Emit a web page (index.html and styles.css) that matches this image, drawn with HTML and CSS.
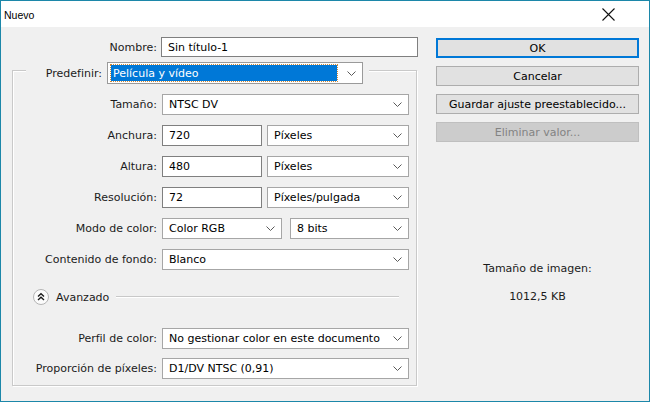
FILE: index.html
```html
<!DOCTYPE html>
<html lang="es">

<head>
    <meta charset="UTF-8">
    <title>Nuevo</title>
    <link rel="stylesheet" href="styles.css">
</head>

<body>
    <div class="dialog">
        <div class="titlebar">
            <span class="title">Nuevo</span>
            <svg class="close" width="13" height="13" viewBox="0 0 13 13">
                <path d="M0.5 0.5 L12.5 12.5 M12.5 0.5 L0.5 12.5" stroke="#111" stroke-width="1.1" fill="none"/>
            </svg>
        </div>

        <div class="content">
            <div class="form">
                <div class="row name-row">
                    <label class="label name-label">Nombre:</label>
                    <div class="field input w-name">Sin título-1</div>
                </div>

                <div class="group">
                    <div class="legend">
                        <label class="label legend-label">Predefinir:</label>
                        <div class="field select focus w-preset">
                            <span class="value">Película y vídeo</span>
                            <svg class="chev" width="9" height="5" viewBox="0 0 9 5"><path d="M0.5 0.5 L4.5 4.5 L8.5 0.5" stroke="#5a5a5a" fill="none"/></svg>
                        </div>
                    </div>

                    <div class="row">
                        <label class="label">Tamaño:</label>
                        <div class="field select w-full">
                            <span class="value">NTSC DV</span>
                            <svg class="chev" width="9" height="5" viewBox="0 0 9 5"><path d="M0.5 0.5 L4.5 4.5 L8.5 0.5" stroke="#5a5a5a" fill="none"/></svg>
                        </div>
                    </div>

                    <div class="row">
                        <label class="label">Anchura:</label>
                        <div class="field input w-num">720</div>
                        <div class="field select w-unit">
                            <span class="value">Píxeles</span>
                            <svg class="chev" width="9" height="5" viewBox="0 0 9 5"><path d="M0.5 0.5 L4.5 4.5 L8.5 0.5" stroke="#5a5a5a" fill="none"/></svg>
                        </div>
                    </div>

                    <div class="row">
                        <label class="label">Altura:</label>
                        <div class="field input w-num">480</div>
                        <div class="field select w-unit">
                            <span class="value">Píxeles</span>
                            <svg class="chev" width="9" height="5" viewBox="0 0 9 5"><path d="M0.5 0.5 L4.5 4.5 L8.5 0.5" stroke="#5a5a5a" fill="none"/></svg>
                        </div>
                    </div>

                    <div class="row">
                        <label class="label">Resolución:</label>
                        <div class="field input w-num">72</div>
                        <div class="field select w-unit">
                            <span class="value">Píxeles/pulgada</span>
                            <svg class="chev" width="9" height="5" viewBox="0 0 9 5"><path d="M0.5 0.5 L4.5 4.5 L8.5 0.5" stroke="#5a5a5a" fill="none"/></svg>
                        </div>
                    </div>

                    <div class="row">
                        <label class="label">Modo de color:</label>
                        <div class="field select w-mode">
                            <span class="value">Color RGB</span>
                            <svg class="chev" width="9" height="5" viewBox="0 0 9 5"><path d="M0.5 0.5 L4.5 4.5 L8.5 0.5" stroke="#5a5a5a" fill="none"/></svg>
                        </div>
                        <div class="field select w-bits">
                            <span class="value">8 bits</span>
                            <svg class="chev" width="9" height="5" viewBox="0 0 9 5"><path d="M0.5 0.5 L4.5 4.5 L8.5 0.5" stroke="#5a5a5a" fill="none"/></svg>
                        </div>
                    </div>

                    <div class="row">
                        <label class="label">Contenido de fondo:</label>
                        <div class="field select w-full">
                            <span class="value">Blanco</span>
                            <svg class="chev" width="9" height="5" viewBox="0 0 9 5"><path d="M0.5 0.5 L4.5 4.5 L8.5 0.5" stroke="#5a5a5a" fill="none"/></svg>
                        </div>
                    </div>

                    <div class="advanced">
                        <svg class="adv-icon" width="16" height="16" viewBox="0 0 16 16">
                            <circle cx="8" cy="8" r="7.5" fill="#fbfbfb" stroke="#b4b4b4"/>
                            <path d="M5 7.5 L8 4.8 L11 7.5 M5 11 L8 8.3 L11 11" stroke="#1a1a1a" stroke-width="1.4" fill="none"/>
                        </svg>
                        <span class="adv-text">Avanzado</span>
                        <span class="adv-line"></span>
                    </div>

                    <div class="row profile-row">
                        <label class="label">Perfil de color:</label>
                        <div class="field select w-full">
                            <span class="value">No gestionar color en este documento</span>
                            <svg class="chev" width="9" height="5" viewBox="0 0 9 5"><path d="M0.5 0.5 L4.5 4.5 L8.5 0.5" stroke="#5a5a5a" fill="none"/></svg>
                        </div>
                    </div>

                    <div class="row ratio-row">
                        <label class="label">Proporción de píxeles:</label>
                        <div class="field select w-full">
                            <span class="value">D1/DV NTSC (0,91)</span>
                            <svg class="chev" width="9" height="5" viewBox="0 0 9 5"><path d="M0.5 0.5 L4.5 4.5 L8.5 0.5" stroke="#5a5a5a" fill="none"/></svg>
                        </div>
                    </div>
                </div>
            </div>

            <div class="side">
                <div class="btn btn-default">OK</div>
                <div class="btn">Cancelar</div>
                <div class="btn">Guardar ajuste preestablecido...</div>
                <div class="btn btn-disabled">Eliminar valor...</div>

                <div class="size-info">
                    <div class="size-title">Tamaño de imagen:</div>
                    <div class="size-value">1012,5 KB</div>
                </div>
            </div>
        </div>
    </div>
</body>

</html>
```

FILE: styles.css
```css
body {
    margin: 0;
    padding: 0;
    font-family: "DejaVu Sans", Verdana, sans-serif;
    font-size: 11px;
    color: #1b1b1b;
    background-color: #f0f0f0;
}

.dialog {
    width: 648px;
    height: 400px;
    border: 1px solid #1c87a9;
    background-color: #f0f0f0;
}

.titlebar {
    height: 26px;
    background-color: #ffffff;
    display: flex;
    align-items: center;
    justify-content: space-between;
    padding: 0 34px 0 3px;
}

.title {
    font-family: "Liberation Sans", Arial, sans-serif;
    font-size: 10.5px;
    color: #000;
    margin-top: 1px;
}

.close {
    display: block;
}

.content {
    display: flex;
    padding-top: 10px;
}

/* left column */

.form {
    margin-left: 11px;
    width: 407px;
}

.row {
    display: flex;
    align-items: center;
    margin-top: 10px;
}

.name-row {
    margin-top: 0;
}

.label {
    width: 144px;
    text-align: right;
    margin-right: 5px;
    white-space: nowrap;
}

.name-label {
    width: 145px;
    margin-right: 4px;
}

.field {
    box-sizing: border-box;
    height: 21px;
    background-color: #ffffff;
    border: 1px solid #8e8e8e;
    color: #000;
    display: flex;
    align-items: center;
    padding-left: 6px;
    white-space: nowrap;
}

.input {
    border-color: #7f7f7f;
}

.name-row .field {
    height: 20px;
}

.select {
    justify-content: space-between;
    padding-right: 6px;
    border-color: #a6a6a6;
}

.chev {
    display: block;
    flex-shrink: 0;
}

.w-name {
    width: 257px;
}

.w-full {
    width: 247px;
}

.w-num {
    width: 100px;
}

.w-unit {
    width: 142px;
    margin-left: 5px;
}

.w-mode {
    width: 120px;
}

.w-bits {
    width: 119px;
    margin-left: 8px;
}

.w-preset {
    width: 256px;
    height: 22px;
    padding: 2px 6px 2px 3px;
    border-color: #9a9a9a;
}

.select.focus .value {
    flex: 1;
    height: 100%;
    box-sizing: border-box;
    background-color: #0078d7;
    color: #ffffff;
    outline: 1px dotted #d08a3a;
    padding-left: 2px;
    margin-right: 10px;
    display: flex;
    align-items: center;
}

/* group box */

.group {
    margin-top: 13px;
    width: 405px;
    box-sizing: border-box;
    border: 1px solid #c9c9c9;
    box-shadow: inset 1px 1px 0 #ffffff, 1px 1px 0 #ffffff;
    padding: 0 6px 6px 0;
}

.legend {
    display: flex;
    align-items: center;
    width: max-content;
    margin-top: -9px;
    margin-left: 13px;
    padding-right: 6px;
    background-color: #f0f0f0;
}

.legend-label {
    width: 76px;
}

.advanced {
    display: flex;
    align-items: center;
    height: 20px;
    margin-top: 17px;
    margin-left: 20px;
}

.adv-icon {
    display: block;
    margin-right: 7px;
}

.adv-text {
    margin-right: 7px;
}

.adv-line {
    flex: 1;
    height: 0;
    border-top: 1px solid #c8c8c8;
    border-bottom: 1px solid #ffffff;
    margin-right: 11px;
}

.profile-row {
    margin-top: 21px;
}

.ratio-row {
    margin-top: 9px;
}

/* right column */

.side {
    margin-left: 17px;
    width: 203px;
    padding-top: 1px;
    display: flex;
    flex-direction: column;
    gap: 8px;
}

.btn {
    box-sizing: border-box;
    height: 20px;
    border: 1px solid #adadad;
    background-color: #e1e1e1;
    color: #000;
    display: flex;
    align-items: center;
    justify-content: center;
}

.btn-default {
    border: 2px solid #0078d7;
}

.btn-disabled {
    background-color: #cccccc;
    border-color: #bfbfbf;
    color: #838383;
}

.size-info {
    margin-top: 112px;
    text-align: center;
}

.size-value {
    margin-top: 15px;
}
```
